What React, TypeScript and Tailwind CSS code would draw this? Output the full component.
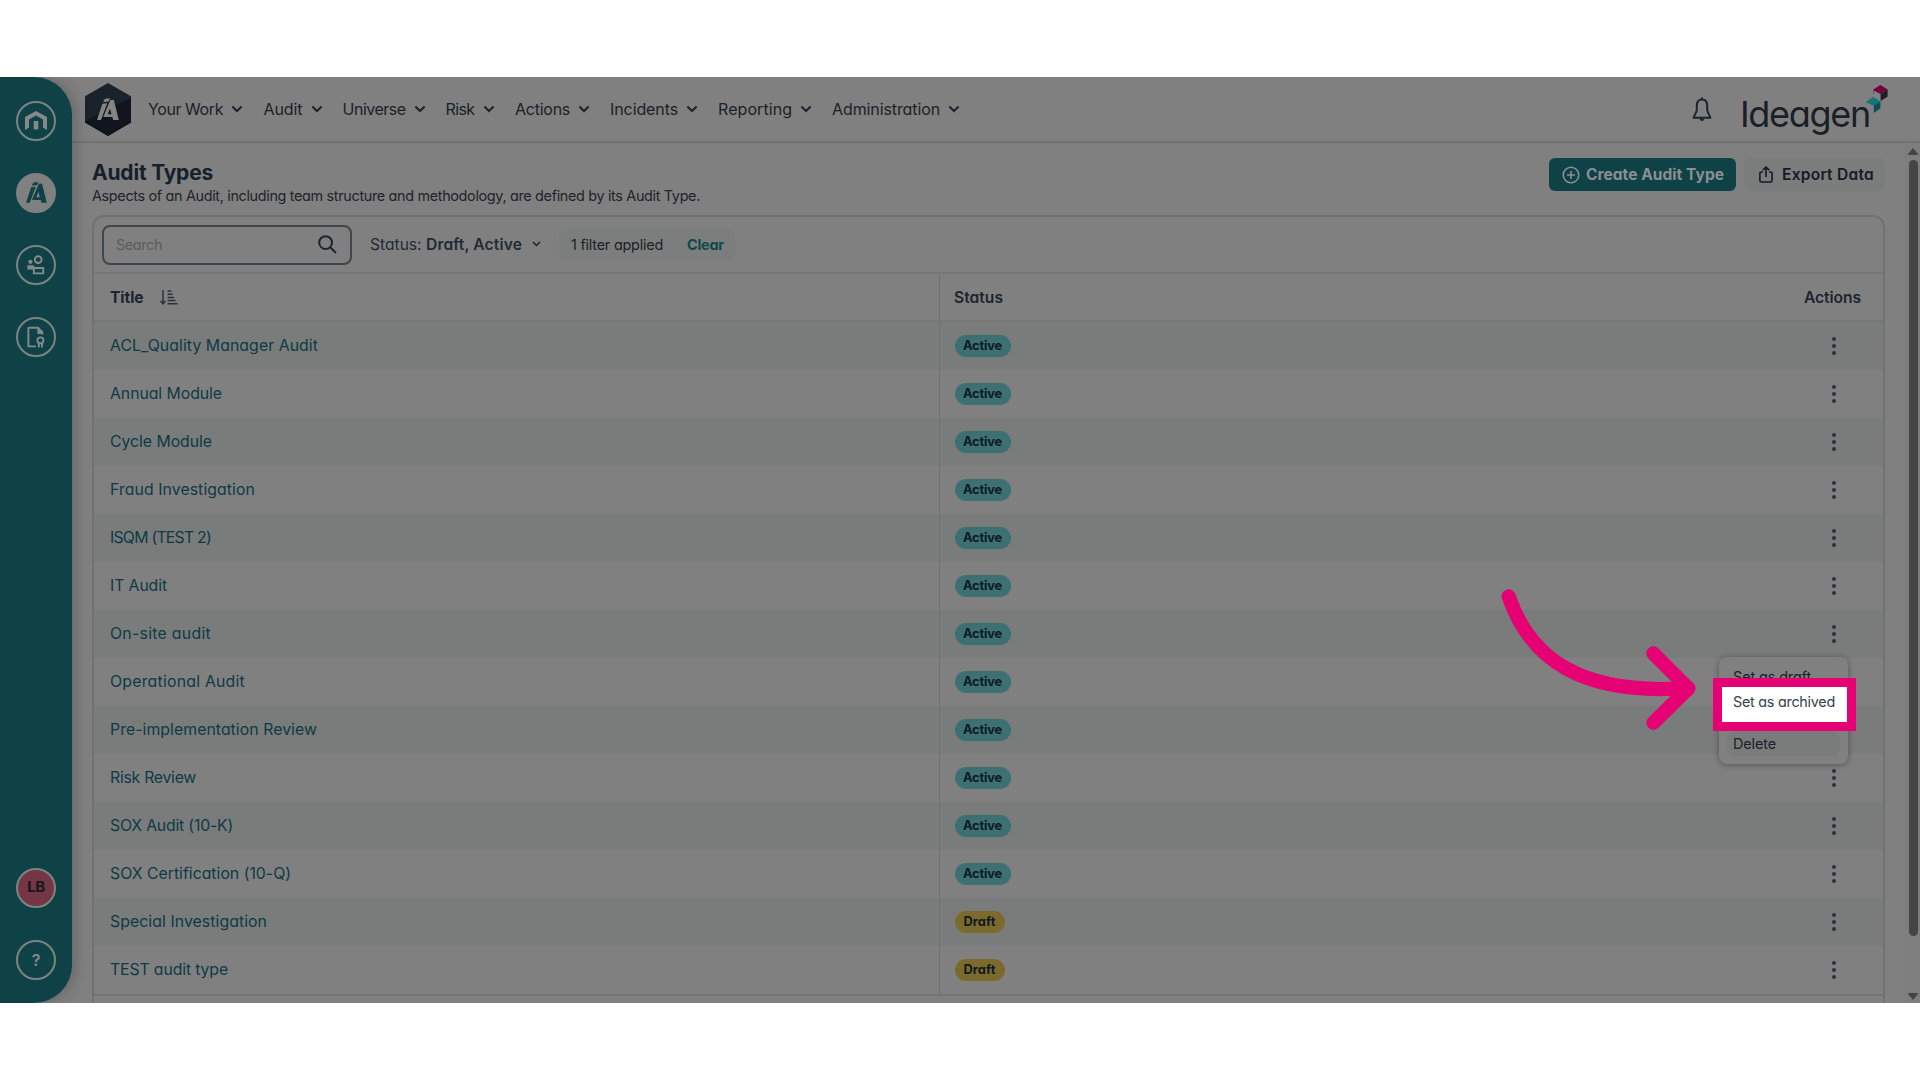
import { useLayoutEffect, useRef, type ReactNode } from "react";

/** Text set to an exact advance width by spreading the difference over its letters. */
function T({ w, className = "", children }: { w: number; className?: string; children: string }) {
  const ref = useRef<HTMLSpanElement>(null);
  useLayoutEffect(() => {
    const el = ref.current;
    if (!el) return;
    el.style.letterSpacing = "0px";
    const natural = el.getBoundingClientRect().width;
    el.style.letterSpacing = `${(w - natural) / children.length}px`;
  }, [w, children]);
  return (
    <span ref={ref} className={`inline-block shrink-0 whitespace-pre ${className}`}>
      {children}
    </span>
  );
}

const nav: [string, number, number][] = [
  ["Your Work", 75, 21.5],
  ["Audit", 39, 21],
  ["Universe", 63, 21],
  ["Risk", 29, 21.5],
  ["Actions", 55, 21],
  ["Incidents", 68, 21],
  ["Reporting", 74, 21],
  ["Administration", 108, 0],
];

const rows: [string, number, boolean][] = [
  ["ACL_Quality Manager Audit", 208, true],
  ["Annual Module", 112, true],
  ["Cycle Module", 102, true],
  ["Fraud Investigation", 145, true],
  ["ISQM (TEST 2)", 101, true],
  ["IT Audit", 57, true],
  ["On-site audit", 101, true],
  ["Operational Audit", 135, true],
  ["Pre-implementation Review", 207, true],
  ["Risk Review", 86, true],
  ["SOX Audit (10-K)", 123, true],
  ["SOX Certification (10-Q)", 181, true],
  ["Special Investigation", 157, false],
  ["TEST audit type", 118, false],
];

function Chevron({ className = "" }: { className?: string }) {
  return (
    <svg viewBox="0 0 12 8" className={`shrink-0 ${className}`} fill="none" stroke="#1b252f" strokeWidth="2.1">
      <path d="M1.4 1.4 6 6 10.6 1.4" />
    </svg>
  );
}

function MarkShape() {
  return (
    <>
      <path d="M8 .5 13 0 11.7 3.2 6 3.8Z" />
      <path d="M5.4 5.5 10.2 5 4 21.8H0Z" />
      <path fillRule="evenodd" d="M13.4 1.8H16.8L21.8 21.8H16.2L15.5 18.9H6.2ZM13 10.6 10.8 16H14.5Z" />
    </>
  );
}

function Ring({ children, className = "" }: { children?: ReactNode; className?: string }) {
  return (
    <div className={`flex size-10 items-center justify-center rounded-full border-2 border-[#7d8383] ${className}`}>
      {children}
    </div>
  );
}

function Sidebar() {
  return (
    <aside className="relative z-10 flex w-18 shrink-0 flex-col items-center gap-8 rounded-r-[38px] bg-[#0f4246] pt-[23.5px] pb-[23.5px] shadow-[3px_0_14px_rgba(0,0,0,0.22)]">
      <Ring>
        <svg viewBox="0 0 22 19" className="h-[19px] w-[22px]" fill="#858989">
          <path d="M0 6 11 0l11 6v13l-4-2.4V8.4L11 4.4 4 8.4v8.2L0 19Z" />
          <path d="M8.7 10h4.6v8.4H8.7Z" />
        </svg>
      </Ring>
      <Ring className="bg-[#808080] !border-[#808080]">
        <svg viewBox="0 0 22 22" className="h-[21px] w-[21px]" fill="#0f4246">
          <MarkShape />
        </svg>
      </Ring>
      <Ring>
        <svg viewBox="0 0 18 20" className="h-5 w-[18px]" fill="none" stroke="#858989" strokeWidth="1.9">
          <circle cx="11.2" cy="4.6" r="3.4" />
          <circle cx="3.4" cy="6.8" r="2.1" fill="#858989" stroke="none" />
          <path d="M6.8 13H16.2V18.4H6.8Z" />
          <path d="M.4 10.3H6.2L7.8 12.1V14.6H.4Z" fill="#858989" stroke="none" />
        </svg>
      </Ring>
      <Ring>
        <svg viewBox="0 0 18 22" className="h-[22px] w-[18px]" fill="none" stroke="#858989" strokeWidth="1.9">
          <path d="M9 20.4H1.9Q1.4 20.4 1.4 19.9V2.3Q1.4 1.7 2 1.7H11L15.4 6.2V8.6" />
          <path d="M10.4 1.2 16 6.8V8H10.4Z" fill="#858989" stroke="none" />
          <circle cx="13.4" cy="14.4" r="3" />
          <path d="M11.8 17.2V21.6M15 17.2V21.6" />
        </svg>
      </Ring>
      <div className="grow" />
      <Ring className="bg-[#743544] text-[15px] font-bold text-[#15161c]">
        <T w={17.5}>LB</T>
      </Ring>
      <Ring className="text-[16px] font-semibold text-[#858989]">?</Ring>
    </aside>
  );
}

function Header() {
  return (
    <header className="flex h-[66px] shrink-0 items-center border-b-2 border-[#727272] pl-[13px]">
      <svg viewBox="0 0 46 53" className="mt-px h-[53px] w-[46px]">
        <path d="M23 0 46 13.2V39.6L23 53 0 39.6V13.2Z" fill="#1a222b" />
        <path d="M46 13.2V39.6L23 53 0 39.6V38L46 14.5Z" fill="#11161e" />
        <g fill="#858585" transform="translate(12 15.2)">
          <MarkShape />
        </g>
      </svg>
      <nav className="ml-[17px] flex items-center text-[16px] text-[#1b1f28]">
        {nav.map(([label, w, gap]) => (
          <div key={label} className="flex items-center" style={{ marginRight: gap }}>
            <T w={w}>{label}</T>
            <Chevron className="ml-2 h-2 w-3 -mr-px" />
          </div>
        ))}
      </nav>
      <div className="grow" />
      <svg viewBox="0 0 20 25" className="mr-[29px] mt-px h-[25px] w-5" fill="none" stroke="#1b252f" strokeWidth="2" strokeLinejoin="round">
        <path d="M10 2.4C6.4 2.4 4.8 5 4.8 8.6V12.4C4.8 15.4 2.6 17.4 1.6 20.8H18.4C17.4 17.4 15.2 15.4 15.2 12.4V8.6C15.2 5 13.6 2.4 10 2.4Z" />
        <path d="M10 .6V2.6" />
        <path d="M7.6 21.4H12.4Q11.8 24 10 24 8.2 24 7.6 21.4Z" fill="#1b252f" stroke="none" />
      </svg>
      <div className="relative mr-8 flex h-[52px] w-[147px] items-center text-[36px] leading-none text-[#192026]">
        <T w={130} className="-ml-px mt-[9px]">
          Ideagen
        </T>
        <svg viewBox="0 0 22 29" className="absolute top-0.5 right-0 h-[29px] w-[22px]">
          <path d="M7.4 4.6 14.4 0 21.6 4.6 14.6 9 7.8 5.6V9H7.4Z" fill="#76003c" />
          <path d="M21.6 4.6V11.4L14.6 16V9Z" fill="#1d1e29" />
          <path d="M.4 16.6 7.4 12 14.4 16.6 7.6 20.8.8 17.6V20H.4Z" fill="#137376" />
          <path d="M14.4 16.6V23.6L7.8 28V20.8Z" fill="#0b5054" />
        </svg>
      </div>
    </header>
  );
}

function PageTitle() {
  return (
    <div className="flex h-[72px] items-start pt-[15px]">
      <div className="flex flex-col pt-px">
        <T w={121} className="self-start text-[21px] leading-[27px] font-bold text-[#161f2b]">
          Audit Types
        </T>
        <T w={608} className="self-start text-[14.4px] leading-[20px] text-[#1f232b]">
          Aspects of an Audit, including team structure and methodology, are defined by its Audit Type.
        </T>
      </div>
      <div className="grow" />
      <div className="flex h-[33px] w-[187px] items-center rounded-md bg-[#0f4246] pl-[13px] text-[#8b8f90]">
        <svg viewBox="0 0 18 18" className="mr-[6px] size-[18px]" fill="none" stroke="currentColor" strokeWidth="1.6">
          <circle cx="9" cy="9" r="7.8" />
          <path d="M9 5V13M5 9H13" />
        </svg>
        <T w={138} className="text-[15.5px] font-bold">
          Create Audit Type
        </T>
      </div>
      <div className="ml-2 flex h-[33px] w-[141px] items-center rounded-md bg-[#7b7d7c] pl-[15px] text-[#161a26]">
        <svg viewBox="0 0 14 17" className="mr-[9px] h-[17px] w-3.5" fill="none" stroke="currentColor" strokeWidth="1.6">
          <path d="M4 6H2.4Q.9 6 .9 7.5V14.4Q.9 16 2.4 16H11.6Q13.1 16 13.1 14.4V7.5Q13.1 6 11.6 6H10" />
          <path d="M7 11V1.4M3.8 4.2 7 1.2 10.2 4.2" />
        </svg>
        <T w={92} className="text-[15.5px] font-semibold">
          Export Data
        </T>
      </div>
    </div>
  );
}

function Filters() {
  return (
    <div className="flex h-[57px] items-center border-b-2 border-[#777777] pl-2">
      <div className="flex h-10 w-[250px] items-center rounded-lg border-2 border-[#40464a] pr-[13px] pl-3">
        <T w={46} className="text-[14.4px] text-[#5c5c5c]">
          Search
        </T>
        <div className="grow" />
        <svg viewBox="0 0 19 19" className="size-[19px]" fill="none" stroke="#1b252f" strokeWidth="2">
          <circle cx="7.6" cy="7.6" r="6.4" />
          <path d="M12.2 12.2 18 18" />
        </svg>
      </div>
      <div className="ml-[18px] flex items-center text-[15.6px] text-[#1f2b33]">
        <T w={56}>Status: </T>
        <T w={96} className="font-semibold">
          Draft, Active
        </T>
        <Chevron className="ml-2.5 h-1.5 w-[9px]" />
      </div>
      <div className="ml-[18px] flex h-8 w-[176px] items-center rounded-lg bg-[#7b7e7c] pl-3 text-[14.4px] text-[#1b1f28]">
        <T w={92}>1 filter applied</T>
        <T w={37} className="ml-6 font-bold text-[#11484c]">
          Clear
        </T>
      </div>
    </div>
  );
}

function Dots() {
  return (
    <div className="-mt-px flex flex-col gap-[3px]">
      <i className="size-1 rounded-full bg-[#29323e]" />
      <i className="size-1 rounded-full bg-[#29323e]" />
      <i className="size-1 rounded-full bg-[#29323e]" />
    </div>
  );
}

function Table() {
  return (
    <div className="flex grow flex-col">
      <div className="flex h-12 border-b-2 border-[#777777] text-[15.6px] font-semibold text-[#1b2430]">
        <div className="flex w-[846px] items-center border-r border-[#6f7171] pt-px pl-4">
          <T w={33.5} className="font-bold">
            Title
          </T>
          <svg viewBox="0 0 18 15" className="ml-4 h-[15px] w-[18px]" fill="none" stroke="#29323b" strokeWidth="1.5">
            <path d="M3 0V13.6M.6 11 3 13.8 5.4 11" />
            <path d="M7.6 1H11.4M7.6 4.2H12.6M7.6 7.4H14M7.6 10.6H15.6M7.6 13.8H17.6" />
          </svg>
        </div>
        <div className="flex grow items-center justify-between pt-px pr-[22px] pl-3.5">
          <T w={49}>Status</T>
          <T w={57}>Actions</T>
        </div>
      </div>
      <div className="flex flex-col border-b-2 border-[#747474]">
        {rows.map(([title, w, active]) => (
          <div key={title} className="flex h-12 odd:bg-[#797c7a]">
            <div className="flex w-[846px] items-center border-r border-[#6f7171] pl-4 text-[15.8px] text-[#0e3a45]">
              <T w={w}>{title}</T>
            </div>
            <div className="flex grow items-center justify-between pr-[47.5px] pl-[14.5px]">
              {active ? (
                <div className="flex h-[22px] w-14 items-center justify-center rounded-full bg-[#3c7073] text-[12.8px] font-bold text-[#0e1a22]">
                  <T w={39}>Active</T>
                </div>
              ) : (
                <div className="flex h-[22px] w-[50px] items-center justify-center rounded-full bg-[#7c6a2c] text-[12.8px] font-bold text-[#0e1a22]">
                  <T w={32}>Draft</T>
                </div>
              )}
              <Dots />
            </div>
          </div>
        ))}
      </div>
    </div>
  );
}

function Scrollbar() {
  return (
    <div className="flex w-[15px] flex-col items-center bg-[#7e7e7e] pt-[5px] pl-px">
      <svg viewBox="0 0 10 7" className="h-[7px] w-2.5" fill="#454545">
        <path d="M5 0 10 6Q10 7 9 7H1Q0 7 0 6Z" />
      </svg>
      <div className="mt-[5px] h-[776px] w-[9px] rounded-full bg-[#454545]" />
      <svg viewBox="0 0 10 7" className="mt-[57px] h-[7px] w-2.5" fill="#454545">
        <path d="M5 7 10 1Q10 0 9 0H1Q0 0 0 1Z" />
      </svg>
    </div>
  );
}

function RowMenu() {
  return (
    <>
      <div className="absolute top-[657px] left-[1719px] flex h-[107px] w-[129px] flex-col rounded-lg bg-[#808080] px-2 pt-2 text-[14.4px] leading-[24px] text-[#1b2029] shadow-[0_1px_6px_rgba(0,0,0,0.35)]">
        <T w={78} className="ml-[6px] self-start">
          Set as draft
        </T>
        <div className="mt-[42px] flex h-[25px] items-center rounded-lg bg-[#797c7a] pl-1.5">
          <T w={43}>Delete</T>
        </div>
      </div>
      <div className="absolute top-[678px] left-[1713px] flex h-[53px] w-[143px] items-start border-[9.5px] border-[#e50073] bg-white pt-1 pl-[11px] text-[14.4px] leading-[22px] text-[#33424f]">
        <T w={102}>Set as archived</T>
      </div>
      <svg
        viewBox="0 0 200 146"
        className="absolute top-[586px] left-[1498px] h-[146px] w-[200px]"
        fill="none"
        stroke="#e50073"
        strokeWidth="14.2"
        strokeLinecap="round"
        strokeLinejoin="round"
      >
        <path d="M10.6 10.4C32 72 82 110 190 102" />
        <path d="M155.4 67.4 190.4 102.4 155.4 136.8" />
      </svg>
    </>
  );
}

export default function App() {
  return (
    <div className="relative flex h-[1080px] w-[1920px] flex-col overflow-hidden bg-white py-[77px] font-['Inter',sans-serif] [font-feature-settings:'cv11'_1]">
      <div className="flex h-[926px] overflow-hidden bg-[#808080]">
        <Sidebar />
        <div className="flex grow flex-col">
          <Header />
          <div className="flex min-h-0 grow">
            <main className="flex grow flex-col overflow-hidden pr-5 pl-5">
              <PageTitle />
              <div className="flex grow flex-col rounded-t-xl border-2 border-b-0 border-[#727272]">
                <Filters />
                <Table />
              </div>
            </main>
            <Scrollbar />
          </div>
        </div>
      </div>
      <RowMenu />
    </div>
  );
}
